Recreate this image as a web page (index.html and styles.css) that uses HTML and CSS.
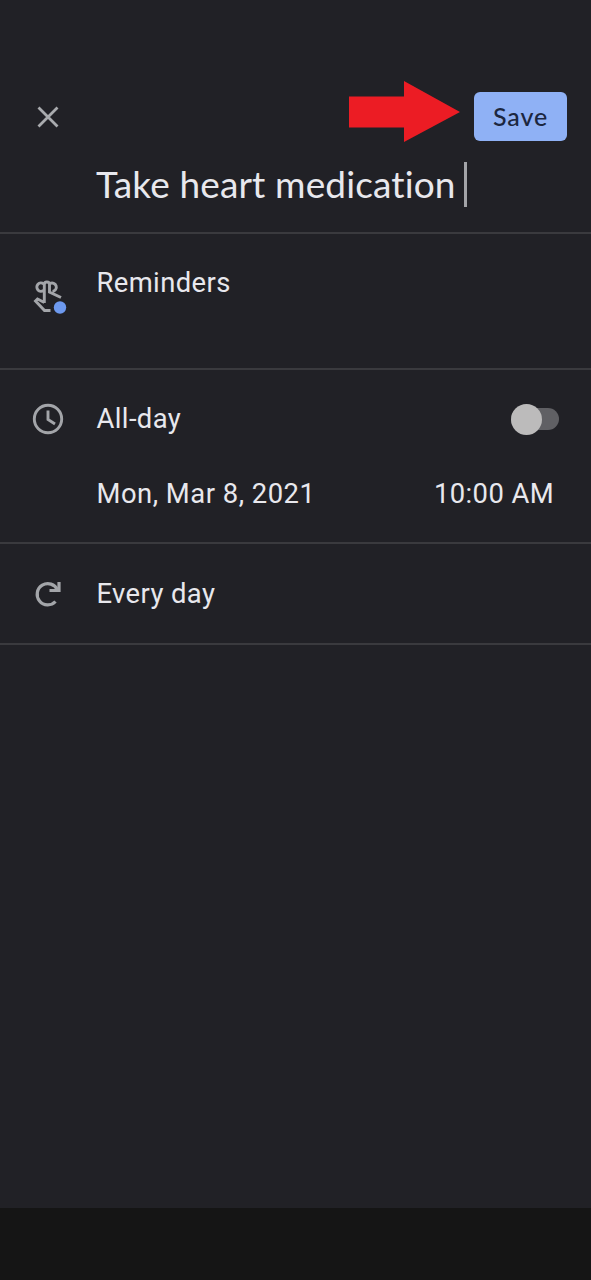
FILE: index.html
```html
<!DOCTYPE html>
<html lang="en">
<head>
<meta charset="utf-8">
<title>Reminder</title>
<link rel="stylesheet" href="styles.css">
</head>
<body>
<main class="screen">
  <header class="header">
    <div class="toolbar">
      <svg class="close" width="22" height="22" viewBox="0 0 22 22"><path d="M1.500 1.500l19 19M20.500 1.500l-19 19"/></svg>
      <svg class="arrow" width="112" height="62" viewBox="0 0 112 62"><path d="M0 15.500H55V0L111 31 55 61V46.500H0z"/></svg>
      <button class="save">Save</button>
    </div>
    <div class="title"><span class="title-text">Take heart medication</span><span class="caret"></span></div>
  </header>
  <section class="row reminders">
    <svg class="icon" width="40" height="40" viewBox="0 0 40 40">
      <path class="line" d="M16.300 25V6.500Q16.300 4 18.900 4T21.500 6.500V14L33 19.500M15.500 5.900A4.100 4.100 0 1 0 15.500 12.300M22 5.600A4.200 4.200 0 1 1 24.500 13.400M16.300 24.500L9.500 21 7.500 23 16.500 32.500H22.500"/>
      <circle class="dot" cx="32" cy="29.500" r="6.200"/>
    </svg>
    <span class="label">Reminders</span>
  </section>
  <section class="schedule">
    <div class="row">
      <svg class="icon" width="40" height="40" viewBox="0 0 40 40"><circle class="line" cx="20" cy="20" r="13.700"/><path class="line" d="M20 11.500v9l7 4.500"/></svg>
      <span class="label all-day">All-day</span>
      <span class="switch"><span class="knob"></span></span>
    </div>
    <div class="when"><span class="date">Mon, Mar 8, 2021</span><span class="time">10:00 AM</span></div>
  </section>
  <section class="row repeat">
    <svg class="icon" width="40" height="40" viewBox="0 0 40 40"><path class="line heavy" d="M27.500 27.500A10.600 10.600 0 1 1 29.500 16"/><path class="line heavy" d="M31 8v8.500H21.500"/></svg>
    <span class="label every">Every day</span>
  </section>
  <div class="space"></div>
  <footer class="navbar"></footer>
</main>
</body>
</html>
```
FILE: styles.css
```css
* { box-sizing: border-box; }
body { margin: 0; background: #212126; }
.screen {
  display: flex;
  flex-direction: column;
  width: 591px;
  height: 1280px;
  color: #e8e8ed;
  font: 27.400px/32px Roboto, sans-serif;
}
.header { height: 234px; padding-top: 81px; border-bottom: 2px solid #3a3a3e; }
.toolbar { display: flex; align-items: center; height: 71px; padding: 0 24px 0 37px; }
.close { fill: none; stroke: #a9abae; stroke-width: 2.800; }
.arrow { margin: -9px 0 0 290px; fill: #ec1c24; }
.save {
  width: 93px;
  height: 49px;
  margin: 0 0 0 auto;
  padding: 0;
  border: 0;
  border-radius: 6px;
  background: #8fb1f5;
  color: #1c2740;
  font: 500 25px/47px Lato, sans-serif;
  letter-spacing: 0.900px;
}
.title { display: flex; align-items: center; height: 65px; padding-left: 96px; }
.title-text {
  font: 37px/44px Lato, sans-serif;
  font-variant-ligatures: none;
  letter-spacing: 0.140px;
  white-space: nowrap;
  margin-top: -1px;
}
.caret { width: 3px; height: 45px; margin-left: auto; margin-right: 124px; background: #a3a4a8; }
.row { display: flex; align-items: center; }
.icon { flex: none; margin: 0 28.500px 0 28px; }
.line { fill: none; stroke: #a3a5a9; stroke-width: 2.900; }
.heavy { stroke-width: 3.200; }
.dot { fill: #6d99ee; }
.reminders { height: 136px; align-items: flex-start; padding-top: 33px; border-bottom: 2px solid #3a3a3e; }
.reminders .icon { margin-top: 11px; }
.label, .date, .time { white-space: nowrap; letter-spacing: 0.400px; }
.date { letter-spacing: 0.500px; }
.schedule { height: 174px; padding-top: 29px; border-bottom: 2px solid #3a3a3e; }
.switch { width: 48px; height: 22px; margin-left: auto; margin-right: 32px; border-radius: 11px; background: #606064; }
.knob { display: block; width: 31px; height: 31px; margin-top: -4.500px; border-radius: 50%; background: #bcbbbb; }
.when { display: flex; justify-content: space-between; padding: 39px 37px 0 96.500px; }
.repeat { height: 101px; border-bottom: 2px solid #3a3a3e; }
.space { flex: 1; }
.navbar { height: 72px; background: #151515; }
```
